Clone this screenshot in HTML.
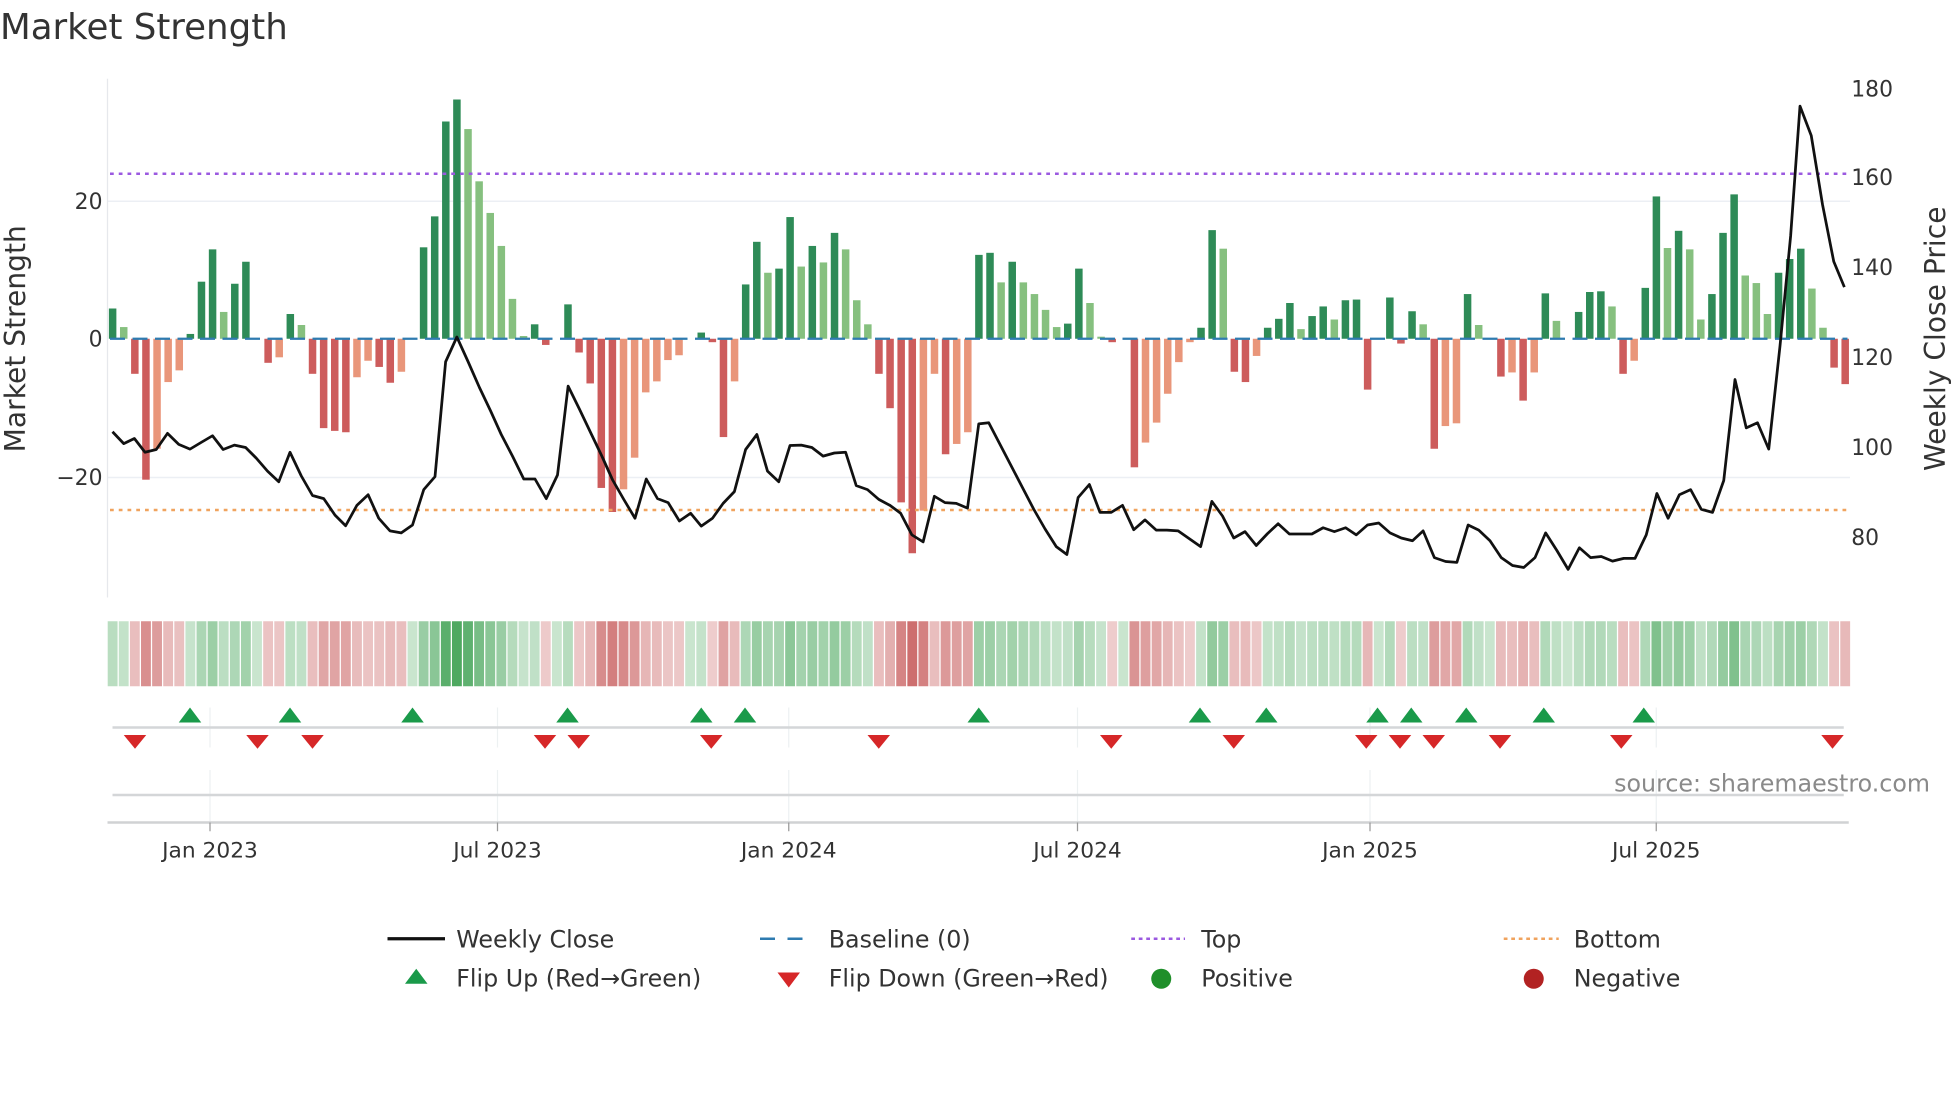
<!DOCTYPE html>
<html><head><meta charset="utf-8"><style>
html,body{margin:0;padding:0;background:#fff;}
svg{display:block;}
text{font-family:"DejaVu Sans","Liberation Sans",sans-serif;fill:#333;}
</style></head><body>
<svg id="s" width="1960" height="1102" viewBox="0 0 1568 881.6" preserveAspectRatio="none" xmlns="http://www.w3.org/2000/svg">
<rect width="1568" height="881.6" fill="#fff"/>
<text x="0" y="31" font-size="28.5" fill="#333">Market Strength</text>
<line x1="86" y1="161" x2="1480" y2="161" stroke="#eceff4" stroke-width="1.2"/>
<line x1="86" y1="382" x2="1480" y2="382" stroke="#eceff4" stroke-width="1.2"/>
<line x1="86" y1="63" x2="86" y2="478" stroke="#e6e8ec" stroke-width="1"/>
<g id="bars"></g>
<line x1="88" y1="271" x2="1478" y2="271" stroke="#2e7bb0" stroke-width="1.8" stroke-dasharray="12,6"/>
<line x1="88" y1="139" x2="1478" y2="139" stroke="#9b59e0" stroke-width="2" stroke-dasharray="3,4"/>
<line x1="88" y1="408" x2="1478" y2="408" stroke="#f0a35e" stroke-width="2" stroke-dasharray="3,4"/>
<polyline id="line" fill="none" stroke="#111" stroke-width="2.2" stroke-linejoin="round"/>
<g font-size="17.5">
<text x="82" y="167" text-anchor="end">20</text>
<text x="82" y="277" text-anchor="end">0</text>
<text x="82" y="388" text-anchor="end">−20</text>
<text x="1481" y="77">180</text>
<text x="1481" y="148">160</text>
<text x="1481" y="220">140</text>
<text x="1481" y="292">120</text>
<text x="1481" y="364">100</text>
<text x="1481" y="436">80</text>
</g>
<text transform="translate(20,271) rotate(-90)" font-size="22.5" text-anchor="middle">Market Strength</text>
<text transform="translate(1556,271) rotate(-90)" font-size="22.5" text-anchor="middle">Weekly Close Price</text>
<g id="strip"></g>
<g stroke="#edf1f2" stroke-width="1">
<line x1="168" y1="566" x2="168" y2="598"/><line x1="398" y1="566" x2="398" y2="598"/><line x1="631" y1="566" x2="631" y2="598"/><line x1="862" y1="566" x2="862" y2="598"/><line x1="1096" y1="566" x2="1096" y2="598"/><line x1="1325" y1="566" x2="1325" y2="598"/>
<line x1="168" y1="616" x2="168" y2="658"/><line x1="398" y1="616" x2="398" y2="658"/><line x1="631" y1="616" x2="631" y2="658"/><line x1="862" y1="616" x2="862" y2="658"/><line x1="1096" y1="616" x2="1096" y2="658"/><line x1="1325" y1="616" x2="1325" y2="658"/>
</g>
<line x1="90" y1="582" x2="1475" y2="582" stroke="#d4d6d8" stroke-width="2"/>
<line x1="90" y1="636" x2="1475" y2="636" stroke="#d4d6d8" stroke-width="2"/>
<line x1="86" y1="658" x2="1479" y2="658" stroke="#d0d2d4" stroke-width="2"/>
<g stroke="#999" stroke-width="1"><line x1="168" y1="658" x2="168" y2="665"/><line x1="398" y1="658" x2="398" y2="665"/><line x1="631" y1="658" x2="631" y2="665"/><line x1="862" y1="658" x2="862" y2="665"/><line x1="1096" y1="658" x2="1096" y2="665"/><line x1="1325" y1="658" x2="1325" y2="665"/></g>
<g id="mk"></g>
<text x="1544" y="633" font-size="19" text-anchor="end" style="fill:#8a8a8a">source: sharemaestro.com</text>
<g font-size="17.4" text-anchor="middle">
<text x="168" y="686">Jan 2023</text><text x="398" y="686">Jul 2023</text><text x="631" y="686">Jan 2024</text><text x="862" y="686">Jul 2024</text><text x="1096" y="686">Jan 2025</text><text x="1325" y="686">Jul 2025</text>
</g>
<g font-size="19">
<line x1="310" y1="751" x2="356" y2="751" stroke="#111" stroke-width="2.6"/>
<text x="365" y="758">Weekly Close</text>
<line x1="608" y1="751" x2="650" y2="751" stroke="#2e7bb0" stroke-width="2" stroke-dasharray="12,10"/>
<text x="663" y="758">Baseline (0)</text>
<line x1="905" y1="751" x2="948" y2="751" stroke="#9b59e0" stroke-width="2" stroke-dasharray="3,3"/>
<text x="961" y="758">Top</text>
<line x1="1203" y1="751" x2="1247" y2="751" stroke="#f0a35e" stroke-width="2" stroke-dasharray="3,3"/>
<text x="1259" y="758">Bottom</text>
<polygon points="324,787 342,787 333,775" fill="#1a9a4a"/>
<text x="365" y="789">Flip Up (Red→Green)</text>
<polygon points="622,778 640,778 631,790" fill="#d62728"/>
<text x="663" y="789">Flip Down (Green→Red)</text>
<circle cx="929" cy="783" r="8" fill="#1f8f2a"/>
<text x="961" y="789">Positive</text>
<circle cx="1227" cy="783" r="8" fill="#b22222"/>
<text x="1259" y="789">Negative</text>
</g>
</svg>
<script>
var B=[[4.4,'D'],[1.7,'L'],[-5.1,'R'],[-20.5,'R'],[-16,'S'],[-6.3,'S'],[-4.6,'S'],[0.7,'D'],[8.3,'D'],[13,'D'],[3.9,'L'],[8,'D'],[11.2,'D'],[0,'Z'],[-3.5,'R'],[-2.7,'S'],[3.6,'D'],[2,'L'],[-5.1,'R'],[-13,'R'],[-13.4,'R'],[-13.6,'R'],[-5.6,'S'],[-3.2,'S'],[-4.1,'R'],[-6.4,'R'],[-4.8,'S'],[0,'Z'],[13.3,'D'],[17.8,'D'],[31.6,'D'],[34.8,'D'],[30.5,'L'],[22.9,'L'],[18.3,'L'],[13.5,'L'],[5.8,'L'],[0.4,'L'],[2.1,'D'],[-0.9,'R'],[0,'Z'],[5,'D'],[-2,'R'],[-6.5,'R'],[-21.7,'R'],[-25.2,'R'],[-21.9,'S'],[-17.3,'S'],[-7.8,'S'],[-6.2,'S'],[-3.1,'S'],[-2.4,'S'],[0,'Z'],[0.9,'D'],[-0.5,'R'],[-14.3,'R'],[-6.2,'S'],[7.9,'D'],[14.1,'D'],[9.6,'L'],[10.2,'D'],[17.7,'D'],[10.5,'L'],[13.5,'D'],[11.1,'L'],[15.4,'D'],[13,'L'],[5.6,'L'],[2.1,'L'],[-5.1,'R'],[-10.1,'R'],[-23.8,'R'],[-31.2,'R'],[-25,'S'],[-5.1,'S'],[-16.8,'R'],[-15.3,'S'],[-13.6,'S'],[12.2,'D'],
[12.5,'D'],[8.2,'L'],[11.2,'D'],[8.2,'L'],[6.5,'L'],[4.2,'L'],[1.7,'L'],[2.2,'D'],[10.2,'D'],[5.2,'L'],[0.3,'L'],[-0.5,'R'],[0,'Z'],[-18.7,'R'],[-15.1,'S'],[-12.2,'S'],[-8,'S'],[-3.4,'S'],[-0.5,'S'],[1.6,'D'],[15.8,'D'],[13.1,'L'],[-4.8,'R'],[-6.3,'R'],[-2.5,'S'],[1.6,'D'],[2.9,'D'],[5.2,'D'],[1.4,'L'],[3.3,'D'],[4.7,'D'],[2.8,'L'],[5.6,'D'],[5.7,'D'],[-7.4,'R'],[0,'Z'],[6,'D'],[-0.7,'R'],[4,'D'],[2.1,'L'],[-16,'R'],[-12.7,'S'],[-12.3,'S'],[6.5,'D'],[2,'L'],[0,'Z'],[-5.5,'R'],[-4.9,'S'],[-9,'R'],[-4.9,'S'],[6.6,'D'],[2.6,'L'],[0,'Z'],[3.9,'D'],[6.8,'D'],[6.9,'D'],[4.7,'L'],[-5.1,'R'],[-3.2,'S'],[7.4,'D'],[20.7,'D'],[13.2,'L'],[15.7,'D'],[13,'L'],[2.8,'L'],[6.5,'D'],[15.4,'D'],[21,'D'],[9.2,'L'],[8.1,'L'],[3.6,'L'],[9.6,'D'],[11.6,'D'],[13.1,'D'],[7.3,'L'],[1.6,'L'],[-4.2,'R'],[-6.6,'R']];
var C={D:'#2e8b57',L:'#86c07f',R:'#cd5c5c',S:'#e9967a'};
var NS='http://www.w3.org/2000/svg';
function el(t,a,p){var e=document.createElementNS(NS,t);for(var k in a)e.setAttribute(k,a[k]);p.appendChild(e);return e;}
var bars=document.getElementById('bars'),strip=document.getElementById('strip');
var x0=90.1,dx=8.885;
B.forEach(function(b,i){var v=b[0],x=x0+i*dx;
 if(v!==0){var y=271-v*5.5,h=Math.abs(v)*5.5;el('rect',{x:x-3,y:Math.min(y,271),width:6,height:Math.max(h,1),fill:C[b[1]]},bars);}
 var a=0.28+0.62*Math.min(Math.abs(v)/35,1);
 var col=v>=0?'rgba(60,160,80,'+a.toFixed(2)+')':'rgba(195,80,80,'+a.toFixed(2)+')';
 el('rect',{x:(x-dx/2+0.5).toFixed(2),y:497,width:(dx-1).toFixed(2),height:52,fill:col},strip);
});
var P1=[[180,1098],[198,1128],[215,1115],[232,1150],[250,1143],[268,1102],[286,1130],[304,1142],[322,1125],[340,1108],[357,1143],[375,1132],[393,1138],[410,1165],[428,1198],[446,1225],[464,1150],[482,1210],[500,1260],[518,1268],[536,1310],[553,1337],[571,1285],[589,1258],[606,1318],[624,1350],[642,1355],[660,1335],[678,1245],[696,1212],[713,920],[731,857],[749,920],[767,985],[785,1045],[802,1105],[820,1160],[838,1218],[856,1218],[874,1268],[892,1208],[909,982],[927,1040],[945,1100],[963,1160],[980,1220],[998,1270],[1016,1318],[1034,1218],[1052,1268],[1069,1278],[1087,1325],[1105,1305],[1122,1338],[1140,1318],[1157,1280],[1175,1250],[1193,1143],[1211,1105],[1228,1198],[1246,1225],[1264,1133],[1282,1132],[1299,1138],[1317,1160],[1335,1152],[1353,1150],[1370,1235],[1388,1245],[1406,1270],[1424,1285],[1441,1305],[1459,1360],[1477,1378],[1495,1262],[1512,1278],[1530,1280],[1548,1292],[1566,1078]];
var P2=[[14,1075],[32,1130],[50,1185],[68,1240],[86,1295],[104,1345],[122,1390],[139,1410],[157,1265],[175,1232],[192,1303],[210,1303],[228,1285],[246,1347],[264,1322],[282,1348],[299,1348],[317,1350],[335,1370],[353,1390],[371,1275],[388,1312],[406,1368],[424,1352],[442,1387],[460,1357],[477,1332],[495,1358],[513,1358],[531,1358],[549,1342],[567,1352],[585,1342],[602,1360],[620,1335],[638,1330],[656,1355],[674,1368],[692,1375],[709,1350],[727,1418],[745,1428],[763,1430],[781,1335],[798,1348],[816,1375],[834,1418],[852,1438],[870,1443],[888,1418],[905,1355],[923,1400],[941,1448],[959,1393],[977,1418],[994,1415],[1012,1427],[1030,1420],[1048,1420],[1066,1360],[1083,1255],[1101,1318],[1119,1258],[1137,1245],[1154,1295],[1172,1303],[1190,1222],[1208,965],[1226,1088],[1244,1075],[1262,1142],[1280,880],[1297,600],[1312,270],[1330,345],[1348,520],[1366,665],[1383,730]];
var pts=P1.concat(P2.map(function(p){return [p[0]+1568,p[1]];}));
document.getElementById('line').setAttribute('points',pts.map(function(p){return (p[0]*0.5).toFixed(1)+','+(p[1]*0.3146).toFixed(1);}).join(' '));
var mk=document.getElementById('mk');
[152,232,330,454,561,596,783,960,1013,1102,1129,1173,1235,1315].forEach(function(x){el('polygon',{points:(x-9)+',578 '+(x+9)+',578 '+x+',566',fill:'#1a9a4a'},mk);});
[108,206,250,436,463,569,703,889,987,1093,1120,1147,1200,1297,1466].forEach(function(x){el('polygon',{points:(x-9)+',588 '+(x+9)+',588 '+x+',599',fill:'#d62728'},mk);});
</script>
</body></html>
